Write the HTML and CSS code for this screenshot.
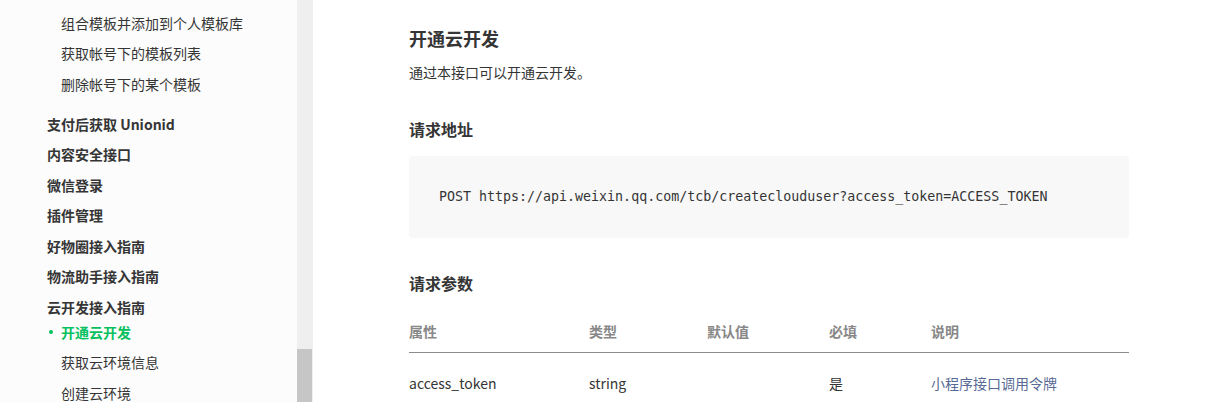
FILE: index.html
```html
<!DOCTYPE html>
<html lang="zh-CN">
<head>
<meta charset="utf-8">
<title>开通云开发</title>
<link rel="stylesheet" href="styles.css">
</head>
<body>
<div class="page">
  <aside class="sidebar">
    <nav class="nav">
      <ul class="nav-sub nav-sub-first">
        <li class="nav-item">组合模板并添加到个人模板库</li>
        <li class="nav-item">获取帐号下的模板列表</li>
        <li class="nav-item">删除帐号下的某个模板</li>
      </ul>
      <div class="nav-title">支付后获取 Unionid</div>
      <div class="nav-title">内容安全接口</div>
      <div class="nav-title">微信登录</div>
      <div class="nav-title">插件管理</div>
      <div class="nav-title">好物圈接入指南</div>
      <div class="nav-title">物流助手接入指南</div>
      <div class="nav-title">云开发接入指南</div>
      <ul class="nav-sub">
        <li class="nav-item nav-item-active"><span class="dot"></span>开通云开发</li>
        <li class="nav-item">获取云环境信息</li>
        <li class="nav-item">创建云环境</li>
      </ul>
    </nav>
  </aside>
  <div class="scrollbar"><div class="scroll-thumb"></div></div>
  <main class="main">
    <h1 class="title">开通云开发</h1>
    <p class="desc">通过本接口可以开通云开发。</p>
    <h2 class="subtitle">请求地址</h2>
    <pre class="code">POST https://api.weixin.qq.com/tcb/createclouduser?access_token=ACCESS_TOKEN</pre>
    <h2 class="subtitle subtitle-params">请求参数</h2>
    <table class="params">
      <colgroup>
        <col class="c1"><col class="c2"><col class="c3"><col class="c4"><col class="c5">
      </colgroup>
      <thead>
        <tr><th>属性</th><th>类型</th><th>默认值</th><th>必填</th><th>说明</th></tr>
      </thead>
      <tbody>
        <tr><td>access_token</td><td>string</td><td></td><td>是</td><td class="link">小程序接口调用令牌</td></tr>
      </tbody>
    </table>
  </main>
</div>
</body>
</html>
```

FILE: styles.css
```css
html, body {
  margin: 0;
  padding: 0;
  background: #ffffff;
}
body {
  font-family: "Noto Sans CJK SC", "Noto Sans", sans-serif;
  color: #353535;
  font-size: 14px;
  height: 402px;
  overflow: hidden;
}
.page {
  display: flex;
  height: 402px;
  overflow: hidden;
}
.sidebar {
  width: 297px;
  flex: none;
  background: #fcfcfc;
  overflow: hidden;
}
.nav {
  padding-top: 7.75px;
}
.nav-sub {
  list-style: none;
  margin: -5.5px 0 9.5px 0;
  padding: 0;
}
.nav-sub-first {
  margin-top: 0;
}
.nav-item {
  line-height: 30.5px;
  height: 30.5px;
  padding-left: 61px;
  font-size: 14px;
  color: #353535;
  white-space: nowrap;
}
.nav-item-active {
  color: #07c160;
  font-weight: bold;
  display: flex;
  align-items: center;
  padding-left: 49px;
}
.dot {
  width: 4px;
  height: 4px;
  border-radius: 50%;
  background: #07c160;
  margin-right: 8px;
  flex: none;
}
.nav-title {
  line-height: 30.5px;
  height: 30.5px;
  padding-left: 47px;
  font-weight: bold;
  font-size: 14px;
  color: #353535;
  white-space: nowrap;
}
.scrollbar {
  width: 16px;
  flex: none;
  background: #efefef;
  display: flex;
  flex-direction: column;
  justify-content: flex-end;
}
.scroll-thumb {
  height: 53px;
  width: 15px;
  background: #c6c6c6;
}
.main {
  flex: 1;
  padding-left: 96px;
  padding-top: 25px;
}
.title {
  margin: 0;
  font-size: 18px;
  line-height: 26px;
  font-weight: bold;
  color: #353535;
}
.desc {
  margin: 10px 0 0 0;
  font-size: 14px;
  line-height: 22px;
  color: #353535;
}
.subtitle {
  margin: 34px 0 0 0;
  font-size: 16px;
  line-height: 24px;
  font-weight: bold;
  color: #353535;
}
.code {
  margin: 15px 0 0 0;
  width: 720px;
  box-sizing: border-box;
  background: #f8f8f8;
  border-radius: 4px;
  padding: 31px 30px;
  font-family: "DejaVu Sans Mono", "Liberation Mono", monospace;
  font-size: 13.3px;
  line-height: 20px;
  color: #353535;
}
.subtitle-params {
  margin-top: 33px;
}
.params {
  margin-top: 14px;
  width: 720px;
  border-collapse: collapse;
  table-layout: fixed;
}
.c1 { width: 180px; }
.c2 { width: 118px; }
.c3 { width: 122px; }
.c4 { width: 102px; }
.c5 { width: 198px; }
.params th {
  text-align: left;
  font-weight: bold;
  color: #888888;
  font-size: 14px;
  line-height: 22px;
  padding: 11px 0 10px 0;
  border-bottom: 1px solid #8c8c8c;
}
.params td {
  text-align: left;
  font-size: 14px;
  line-height: 22px;
  padding: 19px 0 8px 0;
  color: #353535;
}
.params td.link {
  color: #576b95;
}
```
